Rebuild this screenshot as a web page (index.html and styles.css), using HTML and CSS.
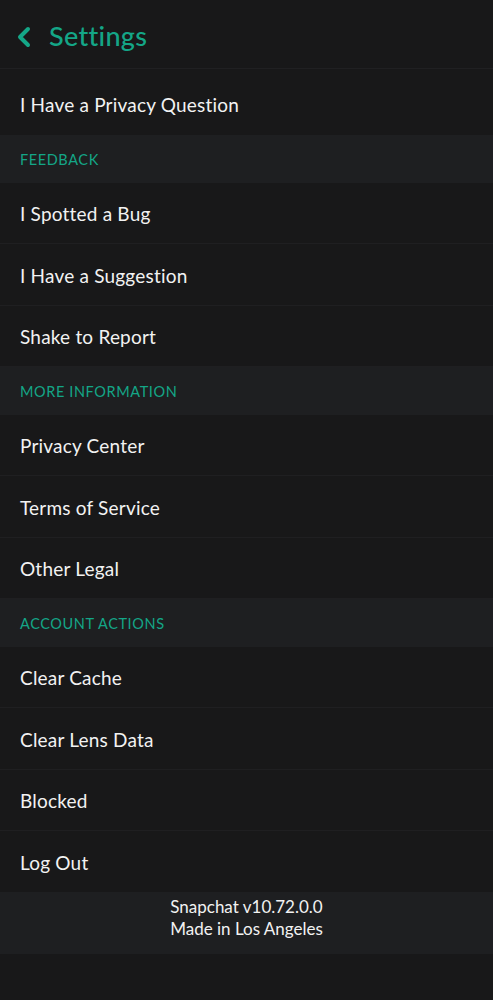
FILE: index.html
```html
<!DOCTYPE html>
<html>
  <head>
    <title>Settings</title>
    <link rel="stylesheet" href="styles.css">
  </head>
  <body>
    <header class="top-bar">
      <svg class="back" width="16" height="22" viewBox="0 0 16 22">
        <path d="M12 3 L4 11 L12 19" fill="none" stroke="#14a687" stroke-width="4" stroke-linecap="round" stroke-linejoin="round" />
      </svg>
      <h1>Settings</h1>
    </header>

    <ul class="list">
      <li class="item first">I Have a Privacy Question</li>
      <li class="section">FEEDBACK</li>
      <li class="item">I Spotted a Bug</li>
      <li class="item">I Have a Suggestion</li>
      <li class="item">Shake to Report</li>
      <li class="section">MORE INFORMATION</li>
      <li class="item">Privacy Center</li>
      <li class="item">Terms of Service</li>
      <li class="item">Other Legal</li>
      <li class="section">ACCOUNT ACTIONS</li>
      <li class="item">Clear Cache</li>
      <li class="item">Clear Lens Data</li>
      <li class="item">Blocked</li>
      <li class="item">Log Out</li>
    </ul>

    <footer class="about">
      <p>Snapchat v10.72.0.0</p>
      <p>Made in Los Angeles</p>
    </footer>
  </body>
</html>
```

FILE: styles.css
```css
* {
  box-sizing: border-box;
}

body {
  margin: 0;
  background-color: #181819;
  font-family: "Lato", "Noto Sans", sans-serif;
  color: #f2f2f2;
}

.top-bar {
  height: 69px;
  display: flex;
  align-items: center;
  padding: 5px 0 0 16px;
  border-bottom: 1px solid #202022;
}

.back {
  display: block;
  margin-right: 17px;
}

h1 {
  margin: 0;
  font-size: 27px;
  font-weight: 500;
  color: #14a687;
  letter-spacing: 0.3px;
  padding-bottom: 2px;
}

.list {
  list-style: none;
  margin: 0;
  padding: 0;
}

.item {
  height: 61.35px;
  display: flex;
  align-items: center;
  padding: 1px 0 0 20px;
  font-size: 19px;
  letter-spacing: 0.2px;
  border-bottom: 1px solid #1f1f21;
}

.item.first {
  height: 66px;
  padding-top: 5px;
  border-bottom: none;
}

.item:last-child {
  border-bottom: none;
}

.section {
  height: 48px;
  display: flex;
  align-items: center;
  padding-left: 20px;
  background-color: #1e1f21;
  color: #14a687;
  font-size: 14.5px;
  letter-spacing: 0.6px;
}

.about {
  height: 62px;
  background-color: #1e1f21;
  text-align: center;
  padding-top: 4px;
  font-size: 17px;
  line-height: 22px;
}

.about p {
  margin: 0;
}
```
